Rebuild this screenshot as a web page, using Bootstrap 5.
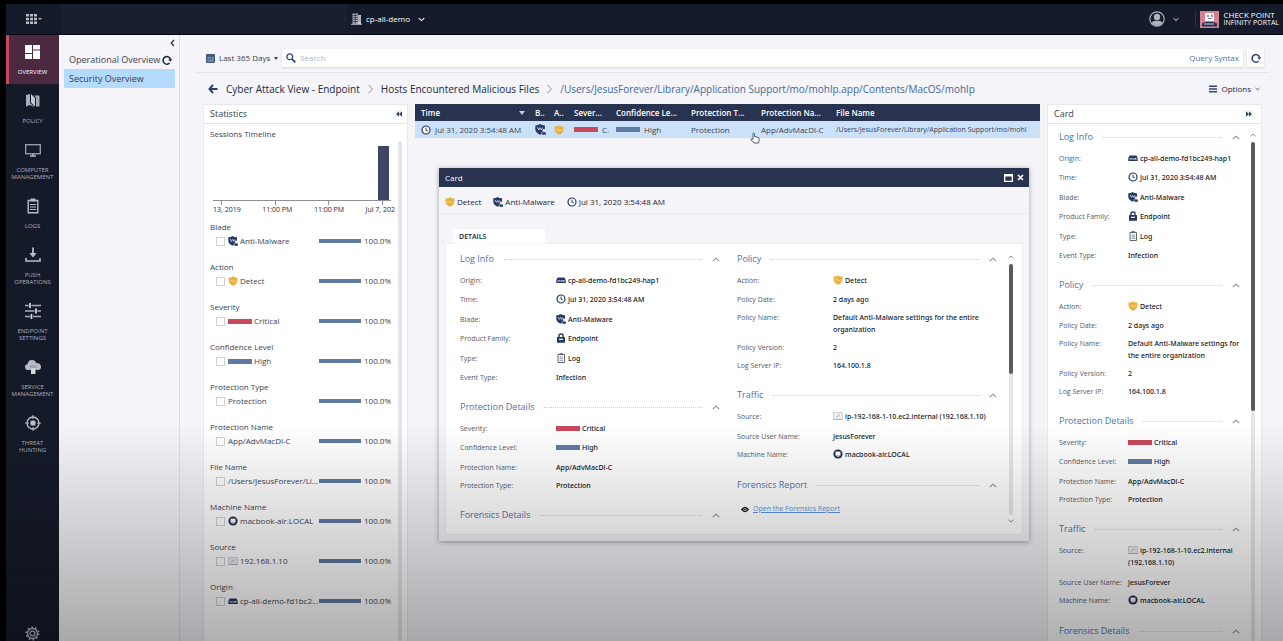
<!DOCTYPE html>
<html lang="en">
<head>
<meta charset="utf-8">
<meta name="viewport" content="width=device-width, initial-scale=1">
<title>Infinity Portal - Security Overview</title>
<link href="https://cdn.jsdelivr.net/npm/bootstrap@5.3.0/dist/css/bootstrap.min.css" rel="stylesheet">
<style>
  :root { --navy:#28334f; --ink:#3c4152; --line:#e3e3e9; --blue:#5f7aa3; --red:#c9485b; --link:#4a74ad; }
  body { font-family:"Open Sans","Noto Sans",sans-serif; font-size:8px; line-height:12px; color:var(--ink); background:#000; overflow:hidden; }
  button, input { font:inherit; color:inherit; }
  a { text-decoration:none; }
  svg { display:block; flex:none; }
  .plain { border:0; background:none; padding:0; }
  .app-shell { height:100vh; border-top:4px solid #000; border-left:6px solid #000; position:relative; }
  .app-shell::after { content:""; position:absolute; inset:auto 0 0 0; height:34vh; z-index:50; pointer-events:none; background:linear-gradient(rgba(0,0,0,0), rgba(0,0,0,.31)); }

  .portal-bar { height:31px; background:#151b2a; color:#fff; border-bottom:1px solid #05070c; }
  .launcher { width:55px; }
  .service-slot { width:286px; background:#191f30; }
  .portal-bar .vr { height:16px; align-self:center; color:#6d7aa0; }
  .brand { font-size:8px; line-height:8px; }
  .brand small { font-size:7px; display:block; }

  .side-rail { width:53px; background:#151a29; }
  .rail-item { padding:8px 0; color:#a9adba; font-size:6px; line-height:7px; text-align:center; }
  .rail-item svg { height:18px; margin:0 auto 8px; }
  .rail-item.current { background:#4b2941; color:#fff; box-shadow:inset 3px 0 #c9485f; }

  .sub-nav { width:121px; background:#f5f4f8; border-right:1px solid #dddde4; font-size:9px; padding:0 4px 0 5px; }
  .sub-nav a { color:var(--ink); padding:3px 3px 3px 5px; }
  .sub-nav a.current { background:#b4dafc; line-height:13px; }

  .workspace { background:#f4f4f9; padding:0 13px 0 17px; }
  .query-bar { height:38px; padding:9px 6px 0 9px; border-bottom:1px solid var(--line); }
  .search-wrap { height:18px; background:#fff; box-shadow:0 1px 2px rgba(0,0,0,.12); }
  .search-wrap input { border:0; outline:0; background:none; }
  .search-wrap input::placeholder { color:#b3b5bd; opacity:1; }
  .search-wrap a { color:var(--link); }
  .square { width:17px; height:18px; background:#fff; box-shadow:0 1px 2px rgba(0,0,0,.14); }
  .crumbs { height:31px; font-size:10px; padding:0 10px 0 11px; color:#23283a; gap:8px; }
  .crumbs a { color:inherit; }
  .crumbs .crumb-now { color:#42689f; }
  .crumbs .options { font-size:8px; }
  .panels { padding:0 8px 0 6px; }

  .pane { background:#fff; border:1px solid #e8e8ed; border-bottom:0; }
  .pane-head { height:19px; border-bottom:1px solid var(--line); font-size:9px; padding:0 5px 0 6px; }
  .stats { width:205px; }
  .stats-body { padding:4px 16px 0 6px; }
  .plot { height:55px; border-bottom:1px solid #8d8f98; padding-right:2px; margin:6px 0 0 3px; }
  .plot-bar { width:11px; background:#3d4664; }
  .ticks { height:4px; padding:0 8px 0 11px; }
  .ticks i { width:1px; background:#8d8f98; }
  .tick-labels { font-size:7px; line-height:10px; color:#23283a; margin:0 -4px 5px 3px; white-space:nowrap; }
  .facet { margin-bottom:12px; line-height:14px; }
  .facet-row { height:14px; padding-left:6px; }
  .facet-row label { white-space:nowrap; gap:2px; }
  .facet-row input { appearance:none; width:9px; height:9px; margin:0 3px 0 0; border:1px solid #cfd0d6; background:transparent; flex:none; }
  .facet-row input:checked { background:var(--blue); }
  .meter { width:42px; height:4px; background:var(--blue); }
  .share { width:30px; text-align:right; }
  .level { display:inline-block; width:24px; height:5px; flex:none; background:var(--blue); }
  .level.critical { background:var(--red); }
  .track { position:absolute; width:4px; background:#e6e6ea; border-radius:2px; }
  .thumb { background:#5b5b60; border-radius:2px; }

  .events { margin:0 7px; }
  .log-table { width:100%; table-layout:fixed; white-space:nowrap; }
  .log-table th { height:17px; background:var(--navy); color:#fff; font-weight:600; padding:0 0 0 6px; overflow:hidden; }
  .log-table td { height:17px; background:#cbe1fa; padding:0 0 0 6px; overflow:hidden; }
  .log-table td:last-child { font-size:7px; }
  .pointer { position:absolute; left:335px; top:28px; z-index:5; }

  .record { position:absolute; left:24px; right:11px; top:64px; background:#f5f4f8; box-shadow:0 1px 5px rgba(0,0,0,.35); z-index:4; color:#1e2233; }
  .record-head { height:19px; background:var(--navy); color:#fff; padding:0 5px 0 6px; }
  .record-sum { height:27px; padding:3px 6px 0; gap:12px; border-bottom:1px solid #e9e9ee; }
  .record-sum span { gap:2px; }
  .record-tab { width:92px; height:15px; margin:15px 0 0 14px; padding:0 6px; font-size:7px; font-weight:600; background:#fff; text-align:left; color:#1e2233; }
  .record-body { margin:0 7px 7px; background:#fff; height:290px; overflow:hidden; padding:8px 25px 0 14px; position:relative; box-shadow:0 0 1px rgba(0,0,0,.2); gap:17px; }
  .col-facts { width:0; flex:1 1 0; }

  .detail { width:215px; }
  .detail-body { padding:6px 21px 0 11px; position:relative; }
  .fact-head { height:14px; font-size:9px; color:var(--link); margin-bottom:9px; gap:10px; }
  .fact-head h2 { font-size:9px; line-height:14px; font-weight:400; margin:0; }
  .fact-head i { border-top:1px dotted #cfd1d8; }
  .facts { margin:0 0 10px; font-size:7px; }
  .fact { display:grid; grid-template-columns:96px 1fr; min-height:18px; }
  .fact dt { font-weight:400; color:#555a68; white-space:nowrap; }
  .fact dd { margin:0 0 6px; font-family:"Noto Sans","Open Sans",sans-serif; font-weight:500; color:#141828; }
  .fact.pic { min-height:19px; }
  .fact.pic:nth-child(even) { min-height:20px; }
  .fact.roomy dd { margin-bottom:8px; }
  .fact svg, .fact .level { display:inline-block; vertical-align:middle; margin:-2px 2px 0 0; }
  .detail .fact { grid-template-columns:69px 1fr; }
  .detail dd { margin-right:-8px; }
  .report-link { font-size:7px; color:#5c94dd; text-decoration:underline; margin-top:11px; }
</style>
</head>
<body>
<svg width="0" height="0" class="position-absolute" aria-hidden="true">
  <symbol id="i-clock" viewBox="0 0 10 10"><circle cx="5" cy="5" r="4" fill="#fff" stroke="#263a66" stroke-width="1.2"/><path d="M5 2.6V5.2L6.8 6" fill="none" stroke="#263a66"/></symbol>
  <symbol id="i-blade" viewBox="0 0 10 10"><path d="M.3 1.3Q3 1.300 4.600 0Q6.200 1.300 9 1.300V5Q8.500 8.200 4.600 9.700Q.6 8.200.3 5Z" fill="#263a66"/><path d="M2.200 3l1.200 2.400L4.700 3.400 5.800 5.400 6.800 3.400" fill="none" stroke="#dfe6f3" stroke-width=".8"/><circle cx="8" cy="5.800" r="1.200" fill="#e8edf6"/><path d="M6.200 7.200h3.800V10H6.200z" fill="#263a66" stroke="#fff" stroke-width=".4"/></symbol>
  <symbol id="i-detect" viewBox="0 0 10 10"><path d="M.6 1.300Q3 2 5 .3Q7 2 9.400 1.300V5Q9 8.200 5 9.800Q1 8.200.6 5Z" fill="#e9b140"/><path d="M1.800 5h1.400L4.300 3.900 5.600 6.100 6.700 5h1.500" fill="none" stroke="#fbe3a8" stroke-width=".7"/></symbol>
  <symbol id="i-lock" viewBox="0 0 10 10"><path d="M3 5V2.600Q3 1 5 1Q7 1 7 2.600V5" fill="none" stroke="#263a66" stroke-width="1.400"/><rect x="1" y="4" width="8" height="5.700" rx=".5" fill="#263a66"/><rect x="3" y="5.700" width="4" height="1.200" fill="#fff"/></symbol>
  <symbol id="i-log" viewBox="0 0 10 10"><path d="M2 1.500h6.500v8H2zM3.500.7H7" fill="#fff" stroke="#5d6678"/><path d="M3.500 4h3.600M3.500 5.700h3.600M3.500 7.400h3.600" stroke="#7a8190" stroke-width=".8"/></symbol>
  <symbol id="i-gateway" viewBox="0 0 10 10"><path d="M.3 5L1.600 2.600H8.400L9.700 5V8H.3Z" fill="#263a66"/><path d="M1.600 5h6.900v1.600H1.600z" fill="#c8d2e4"/><path d="M3 5v1.600M4.600 5v1.600M6 5v1.600" stroke="#263a66" stroke-width=".6"/></symbol>
  <symbol id="i-host" viewBox="0 0 10 10"><circle cx="5" cy="5" r="4.600" fill="#1f2f57"/><path d="M2.500 2.600h5v4h-5z" fill="#fff"/><path d="M3.500 7.200h3" stroke="#fff" stroke-width=".8"/></symbol>
  <symbol id="i-source" viewBox="0 0 10 10"><rect x=".5" y="1.500" width="9" height="7" fill="#eee" stroke="#c4c5ca" stroke-width=".7"/><path d="M3 6.200L7 3.500M.7 8.500h9" stroke="#a0a2a9" stroke-width=".7"/></symbol>
  <symbol id="i-up" viewBox="0 0 8 5"><path d="M.8 4.200L4 1.200 7.200 4.200" fill="none" stroke="currentColor" stroke-width="1.100"/></symbol>
  <symbol id="i-down" viewBox="0 0 8 5"><path d="M.8.800L4 3.800 7.200.8" fill="none" stroke="currentColor" stroke-width="1.200"/></symbol>
  <symbol id="i-reload" viewBox="0 0 10 10"><path d="M7.600 8A3.800 3.800 0 1 1 8.500 4.200" fill="none" stroke="currentColor" stroke-width="1.500"/><path d="M6.200 4.200H10.200L8.400 6.800Z" fill="currentColor"/></symbol>
</svg>

<div class="app-shell d-flex flex-column">
  <header class="portal-bar d-flex flex-shrink-0">
    <button class="plain launcher d-flex align-items-center justify-content-center" aria-label="Applications">
      <svg width="16" height="10" viewBox="0 0 16 10" fill="#b9bcc6"><path d="M0 0h3v2.600H0zM4 0h3v2.600H4zM8 0h3v2.600H8zM0 3.700h3v2.600H0zM4 3.700h3v2.600H4zM8 3.700h3v2.600H8zM0 7.400h3V10H0zM4 7.400h3V10H4zM8 7.400h3V10H8zM12 4h4l-2 2z"/></svg>
    </button>
    <div class="service-slot"></div>
    <button class="plain d-flex align-items-center ps-1">
      <svg width="11" height="12" viewBox="0 0 11 12"><path d="M1.500.5h5.500V11H1.500z" fill="#a3a9b7"/><path d="M2 2.500h6M2 4.500h6M2 6.500h6M2 8.500h6M4.300 .5V11" stroke="#2b3347" stroke-width=".7"/><path d="M7 2h3V11H7z" fill="#c9ccd5"/><path d="M7 4h3M7 6h3M7 8h3" stroke="#6d7485" stroke-width=".6"/><path d="M0 11.300h11" stroke="#b9bcc6"/></svg>
      <span class="ms-1">cp-all-demo</span>
      <svg class="ms-2" width="7" height="5"><use href="#i-down"/></svg>
    </button>
    <div class="ms-auto d-flex align-items-center pe-1">
      <button class="plain d-flex align-items-center" aria-label="Account">
        <svg width="16" height="16" viewBox="0 0 16 16"><circle cx="8" cy="8" r="7.200" fill="#161c2b" stroke="#aeb2bd" stroke-width="1.200"/><circle cx="8" cy="6" r="3.200" fill="#aeb2bd"/><path d="M2.400 11.500Q4 9.700 6.300 9.700H9.700Q12 9.700 13.600 11.500Q11.800 14.800 8 15Q4.200 14.800 2.400 11.500Z" fill="#aeb2bd"/></svg>
        <svg class="ms-2" width="6" height="5"><use href="#i-down"/></svg>
      </button>
      <div class="vr ms-3 me-1"></div>
      <svg width="19" height="17" viewBox="0 0 19 17"><rect width="19" height="17" fill="#d4808f"/><path d="M5 2h9v9H5z" fill="#f4f1f4"/><path d="M7 4h2v2H7zM11 3.500h2V6h-2z" fill="#9aa0b2"/><path d="M8 7.500h4" stroke="#7f869b"/><path d="M2 12.500L6 10.500H13L17 12.500V15.500H2Z" fill="#263352"/><path d="M4 13h10" stroke="#cdd2de"/></svg>
      <div class="brand ms-1 text-nowrap">CHECK POINT<small>INFINITY PORTAL</small></div>
    </div>
  </header>

  <div class="d-flex flex-grow-1 overflow-hidden">
    <nav class="side-rail d-flex flex-column flex-shrink-0" aria-label="Sections">
      <a href="#" class="rail-item current"><svg width="15" viewBox="0 0 15 18" fill="#fff"><path d="M0 2h7v8H0zM8 2h7v4.500H8zM0 11h7v5H0zM8 7.500h7V16H8z"/></svg>OVERVIEW</a>
      <a href="#" class="rail-item"><svg width="14" viewBox="0 0 14 18"><path d="M0 3L4 2V11L9 15.500 4 13 0 14.500Z" fill="#a9adba"/><path d="M5 2L9 6V14.500L5 10.500Z" fill="#c4c7d0"/><path d="M8 3.500H13.500V14.500H10V5.500Z" fill="#a1a6b4"/></svg>POLICY</a>
      <a href="#" class="rail-item"><svg width="16" viewBox="0 0 16 18"><rect x=".7" y="3.700" width="14.600" height="9" fill="none" stroke="#9da2b0" stroke-width="1.300"/><path d="M5 15h6M8 13v2" stroke="#b9bcc6" stroke-width="1.500"/></svg>COMPUTER<br>MANAGEMENT</a>
      <a href="#" class="rail-item"><svg width="12" viewBox="0 0 12 18"><path d="M1.200 3.500h9.600v12.300H1.200z" fill="none" stroke="#b9bcc6" stroke-width="1.400"/><path d="M3.500 1.500h5v3h-5z" fill="#b9bcc6"/><path d="M3 7.500h6M3 10h6M3 12.500h6" stroke="#b9bcc6" stroke-width="1.200"/></svg>LOGS</a>
      <a href="#" class="rail-item"><svg width="16" viewBox="0 0 16 18"><path d="M8 1.500V9" stroke="#b9bcc6" stroke-width="1.800"/><path d="M4.300 7h7.400L8 11.500z" fill="#b9bcc6"/><path d="M1 12v3h14v-3" fill="none" stroke="#b9bcc6" stroke-width="1.600"/></svg>PUSH<br>OPERATIONS</a>
      <a href="#" class="rail-item"><svg width="16" viewBox="0 0 16 18"><path d="M0 3.500h3.500M6.500 3.500H16M0 9h9.500M12.500 9H16M0 14.500h5M8 14.500h8" stroke="#a9adba" stroke-width="1.400"/><path d="M5 1v5M11 6.500v5M6.500 12v5" stroke="#dfe1e6" stroke-width="1.700"/></svg>ENDPOINT<br>SETTINGS</a>
      <a href="#" class="rail-item"><svg width="16" viewBox="0 0 16 18"><path d="M3 12Q0 12 0 9Q0 6.500 2.600 6.300Q3 2 7 2Q10.300 2 11.200 5Q16 5 16 9Q16 12 13 12Z" fill="#b9bcc6"/><path d="M5 7h6.500v5H5z" fill="#a0a4b1"/><path d="M6 10h4.500v6H6z" fill="#d5d7de"/></svg>SERVICE<br>MANAGEMENT</a>
      <a href="#" class="rail-item"><svg width="16" viewBox="0 0 16 18"><circle cx="8" cy="9" r="6" fill="none" stroke="#b9bcc6" stroke-width="1.300"/><circle cx="8" cy="9" r="2.600" fill="#c9ccd4"/><path d="M8 1v4M8 13v4M0 9h4M12 9h4M5.500 6.500l5 5M10.500 6.500l-5 5" stroke="#b9bcc6"/></svg>THREAT<br>HUNTING</a>
      <button class="plain mt-auto mx-auto" aria-label="Settings"><svg width="15" height="15" viewBox="0 0 15 15" fill="none" stroke="#b9bcc6"><circle cx="7.500" cy="7.500" r="5" stroke-width="1.300"/><circle cx="7.500" cy="7.500" r="2.400" stroke-width="1.200"/><circle cx="7.500" cy="7.500" r="6.300" stroke-width="1.500" stroke-dasharray="1.600 2.358"/></svg></button>
    </nav>

    <aside class="sub-nav flex-shrink-0">
      <div class="d-flex justify-content-end pt-1"><button class="plain" aria-label="Collapse menu"><svg width="5" height="8" viewBox="0 0 5 8"><path d="M4 1L1.200 4 4 7" fill="none" stroke="#23283a" stroke-width="1.200"/></svg></button></div>
      <nav class="d-flex flex-column mt-1">
        <a href="#" class="d-flex align-items-center justify-content-between text-nowrap">Operational Overview <svg width="10" height="10" color="#1d2130"><use href="#i-reload"/></svg></a>
        <a href="#" class="current">Security Overview</a>
      </nav>
    </aside>

    <main class="workspace flex-grow-1 d-flex flex-column overflow-hidden">
      <div class="query-bar d-flex align-items-center flex-shrink-0">
        <button class="plain d-flex align-items-center text-nowrap">
          <svg width="9" height="9" viewBox="0 0 9 9"><rect width="9" height="9" rx="1" fill="#42587f"/><path d="M1.500 3h6v4.800h-6z" fill="#8ea3c4"/><path d="M1.500 4.500h6M1.500 6h6M3.500 3v4.800M5.500 3v4.800" stroke="#42587f" stroke-width=".6"/></svg>
          <span class="mx-1">Last 365 Days</span>
          <svg width="4" height="3" viewBox="0 0 4 3"><path d="M0 0h4L2 3z" fill="#3c4152"/></svg>
        </button>
        <div class="search-wrap d-flex align-items-center flex-grow-1 mx-1 px-1">
          <svg width="10" height="10" viewBox="0 0 10 10" fill="none" stroke="#31456f"><circle cx="3.800" cy="3.800" r="2.900" stroke-width="1.300"/><path d="M6 6l3.300 3.300" stroke-width="1.800"/></svg>
          <input class="flex-grow-1 ms-1 p-0" type="text" placeholder="Search" aria-label="Search">
          <a href="#">Query Syntax</a>
        </div>
        <button class="plain square d-flex align-items-center justify-content-center" aria-label="Refresh"><svg width="10" height="10" color="#31456f"><use href="#i-reload"/></svg></button>
      </div>

      <div class="crumbs d-flex align-items-center flex-shrink-0 text-nowrap">
        <button class="plain" aria-label="Back"><svg width="10" height="10" viewBox="0 0 10 10"><path d="M5 .8L1.500 5 5 9.200M1.500 5H9.500" fill="none" stroke="#28406f" stroke-width="2"/></svg></button>
        <a href="#">Cyber Attack View - Endpoint</a>
        <svg width="5" height="10" viewBox="0 0 5 10"><path d="M.5 .8L4.500 5 .5 9.200" fill="none" stroke="#8a8d97"/></svg>
        <a href="#">Hosts Encountered Malicious Files</a>
        <svg width="5" height="10" viewBox="0 0 5 10"><path d="M.5 .8L4.500 5 .5 9.200" fill="none" stroke="#8a8d97"/></svg>
        <a href="#" class="crumb-now">/Users/JesusForever/Library/Application Support/mo/mohlp.app/Contents/MacOS/mohlp</a>
        <button class="plain options ms-auto d-flex align-items-center">
          <svg width="8" height="8" viewBox="0 0 8 8"><path d="M0 1.200h8M0 4h8M0 6.800h8" stroke="#31456f" stroke-width="1.500"/></svg>
          <span class="mx-1">Options</span>
          <svg width="5" height="4"><use href="#i-down"/></svg>
        </button>
      </div>

      <div class="panels d-flex flex-grow-1 overflow-hidden">
        <section class="pane stats flex-shrink-0 position-relative">
          <div class="pane-head d-flex align-items-center justify-content-between"><span>Statistics</span><button class="plain" aria-label="Collapse statistics"><svg width="6" height="6" viewBox="0 0 6 6"><path d="M3 .3L0 3 3 5.700zM6 .3L3 3 6 5.700z" fill="#31456f"/></svg></button></div>
          <div class="stats-body">
            <div>Sessions Timeline</div>
            <div class="plot d-flex align-items-end justify-content-end"><div class="plot-bar" style="height:100%"></div></div>
            <div class="ticks d-flex justify-content-between"><i></i><i></i><i></i><i></i></div>
            <div class="tick-labels d-flex justify-content-between"><span>13, 2019</span><span>11:00 PM</span><span>11:00 PM</span><span>Jul 7, 202</span></div>

            <div class="facet">Blade
              <div class="facet-row d-flex align-items-center"><input type="checkbox" id="f1"><label for="f1" class="d-flex align-items-center flex-grow-1"><svg width="10" height="10"><use href="#i-blade"/></svg>Anti-Malware</label><span class="meter"></span><span class="share">100.0%</span></div></div>
            <div class="facet">Action
              <div class="facet-row d-flex align-items-center"><input type="checkbox" id="f2"><label for="f2" class="d-flex align-items-center flex-grow-1"><svg width="10" height="10"><use href="#i-detect"/></svg>Detect</label><span class="meter"></span><span class="share">100.0%</span></div></div>
            <div class="facet">Severity
              <div class="facet-row d-flex align-items-center"><input type="checkbox" id="f3"><label for="f3" class="d-flex align-items-center flex-grow-1"><span class="level critical"></span>Critical</label><span class="meter"></span><span class="share">100.0%</span></div></div>
            <div class="facet">Confidence Level
              <div class="facet-row d-flex align-items-center"><input type="checkbox" id="f4"><label for="f4" class="d-flex align-items-center flex-grow-1"><span class="level"></span>High</label><span class="meter"></span><span class="share">100.0%</span></div></div>
            <div class="facet">Protection Type
              <div class="facet-row d-flex align-items-center"><input type="checkbox" id="f5"><label for="f5" class="flex-grow-1">Protection</label><span class="meter"></span><span class="share">100.0%</span></div></div>
            <div class="facet">Protection Name
              <div class="facet-row d-flex align-items-center"><input type="checkbox" id="f6"><label for="f6" class="flex-grow-1">App/AdvMacDl-C</label><span class="meter"></span><span class="share">100.0%</span></div></div>
            <div class="facet">File Name
              <div class="facet-row d-flex align-items-center"><input type="checkbox" id="f7"><label for="f7" class="flex-grow-1">/Users/JesusForever/Li...</label><span class="meter"></span><span class="share">100.0%</span></div></div>
            <div class="facet">Machine Name
              <div class="facet-row d-flex align-items-center"><input type="checkbox" id="f8"><label for="f8" class="d-flex align-items-center flex-grow-1"><svg width="10" height="10"><use href="#i-host"/></svg>macbook-air.LOCAL</label><span class="meter"></span><span class="share">100.0%</span></div></div>
            <div class="facet">Source
              <div class="facet-row d-flex align-items-center"><input type="checkbox" id="f9"><label for="f9" class="d-flex align-items-center flex-grow-1"><svg width="10" height="10"><use href="#i-source"/></svg>192.168.1.10</label><span class="meter"></span><span class="share">100.0%</span></div></div>
            <div class="facet">Origin
              <div class="facet-row d-flex align-items-center"><input type="checkbox" id="f10"><label for="f10" class="d-flex align-items-center flex-grow-1"><svg width="10" height="10"><use href="#i-gateway"/></svg>cp-all-demo-fd1bc2...</label><span class="meter"></span><span class="share">100.0%</span></div></div>
          </div>
          <div class="track" style="right:5px;top:36px;bottom:0"></div>
        </section>

        <section class="events flex-grow-1 position-relative" style="min-width:0">
          <table class="log-table">
            <colgroup><col style="width:114px"><col style="width:19px"><col style="width:20px"><col style="width:42px"><col style="width:75px"><col style="width:70px"><col style="width:75px"><col></colgroup>
            <thead><tr><th><div class="d-flex align-items-center justify-content-between pe-1">Time<svg width="6" height="4" viewBox="0 0 6 4"><path d="M0 0h6L3 4z" fill="#c9cddb"/></svg></div></th><th>B..</th><th>A..</th><th>Sever...</th><th>Confidence Le...</th><th>Protection T...</th><th>Protection Na...</th><th>File Name</th></tr></thead>
            <tbody><tr>
              <td><div class="d-flex align-items-center"><svg class="me-1" width="10" height="10"><use href="#i-clock"/></svg>Jul 31, 2020 3:54:48 AM</div></td>
              <td><svg width="11" height="11"><use href="#i-blade"/></svg></td>
              <td><svg width="10" height="10"><use href="#i-detect"/></svg></td>
              <td><div class="d-flex align-items-center gap-1"><span class="level critical"></span>C.</div></td>
              <td><div class="d-flex align-items-center gap-1"><span class="level"></span>High</div></td>
              <td>Protection</td><td>App/AdvMacDl-C</td><td>/Users/JesusForever/Library/Application Support/mo/mohl</td>
            </tr></tbody>
          </table>
          <svg class="pointer" width="10" height="12" viewBox="0 0 10 12"><path d="M3 7.500V1.500Q3.700.5 4.400 1.500V4.500L8.500 5.500Q9.500 6 9.200 7.500L8.500 11H4L.8 7.700Q.8 6.500 2 6.800Z" fill="#fff" stroke="#333849" stroke-width=".8"/></svg>

          <article class="record">
            <div class="record-head d-flex align-items-center"><span class="me-auto">Card</span>
              <button class="plain me-1" aria-label="Maximize"><svg width="9" height="8" viewBox="0 0 9 8"><path d="M0 0h9v8H0zM1.300 2.600v4.100h6.400V2.600z" fill="#fff" fill-rule="evenodd"/></svg></button>
              <button class="plain" aria-label="Close"><svg width="7" height="7" viewBox="0 0 7 7"><path d="M1 1l5 5M6 1L1 6" stroke="#fff" stroke-width="1.700"/></svg></button></div>
            <div class="record-sum d-flex align-items-center">
              <span class="d-flex align-items-center"><svg width="10" height="10"><use href="#i-detect"/></svg>Detect</span>
              <span class="d-flex align-items-center"><svg width="10" height="10"><use href="#i-blade"/></svg>Anti-Malware</span>
              <span class="d-flex align-items-center"><svg width="10" height="10"><use href="#i-clock"/></svg>Jul 31, 2020 3:54:48 AM</span>
            </div>
            <button class="plain record-tab d-block">DETAILS</button>
            <div class="record-body d-flex">
              <div class="col-facts">
                <div class="fact-head d-flex align-items-center"><h2>Log Info</h2><i class="flex-grow-1"></i><svg width="8" height="5" color="#8b8d95"><use href="#i-up"/></svg></div>
                <dl class="facts">
                  <div class="fact pic"><dt>Origin:</dt><dd><svg width="10" height="10"><use href="#i-gateway"/></svg>cp-all-demo-fd1bc249-hap1</dd></div>
                  <div class="fact pic"><dt>Time:</dt><dd><svg width="10" height="10"><use href="#i-clock"/></svg>Jul 31, 2020 3:54:48 AM</dd></div>
                  <div class="fact pic"><dt>Blade:</dt><dd><svg width="10" height="10"><use href="#i-blade"/></svg>Anti-Malware</dd></div>
                  <div class="fact pic"><dt>Product Family:</dt><dd><svg width="10" height="10"><use href="#i-lock"/></svg>Endpoint</dd></div>
                  <div class="fact pic"><dt>Type:</dt><dd><svg width="10" height="10"><use href="#i-log"/></svg>Log</dd></div>
                  <div class="fact"><dt>Event Type:</dt><dd>Infection</dd></div>
                </dl>
                <div class="fact-head d-flex align-items-center"><h2>Protection Details</h2><i class="flex-grow-1"></i><svg width="8" height="5" color="#8b8d95"><use href="#i-up"/></svg></div>
                <dl class="facts">
                  <div class="fact pic"><dt>Severity:</dt><dd><span class="level critical"></span>Critical</dd></div>
                  <div class="fact pic"><dt>Confidence Level:</dt><dd><span class="level"></span>High</dd></div>
                  <div class="fact"><dt>Protection Name:</dt><dd>App/AdvMacDl-C</dd></div>
                  <div class="fact"><dt>Protection Type:</dt><dd>Protection</dd></div>
                </dl>
                <div class="fact-head d-flex align-items-center"><h2>Forensics Details</h2><i class="flex-grow-1"></i><svg width="8" height="5" color="#8b8d95"><use href="#i-up"/></svg></div>
              </div>
              <div class="col-facts">
                <div class="fact-head d-flex align-items-center"><h2>Policy</h2><i class="flex-grow-1"></i><svg width="8" height="5" color="#8b8d95"><use href="#i-up"/></svg></div>
                <dl class="facts">
                  <div class="fact pic"><dt>Action:</dt><dd><svg width="10" height="10"><use href="#i-detect"/></svg>Detect</dd></div>
                  <div class="fact"><dt>Policy Date:</dt><dd>2 days ago</dd></div>
                  <div class="fact"><dt>Policy Name:</dt><dd>Default Anti-Malware settings for the entire organization</dd></div>
                  <div class="fact"><dt>Policy Version:</dt><dd>2</dd></div>
                  <div class="fact"><dt>Log Server IP:</dt><dd>164.100.1.8</dd></div>
                </dl>
                <div class="fact-head d-flex align-items-center"><h2>Traffic</h2><i class="flex-grow-1"></i><svg width="8" height="5" color="#8b8d95"><use href="#i-up"/></svg></div>
                <dl class="facts">
                  <div class="fact pic roomy"><dt>Source:</dt><dd class="text-nowrap"><svg width="10" height="10"><use href="#i-source"/></svg>ip-192-168-1-10.ec2.internal (192.168.1.10)</dd></div>
                  <div class="fact"><dt>Source User Name:</dt><dd>JesusForever</dd></div>
                  <div class="fact pic"><dt>Machine Name:</dt><dd><svg width="10" height="10"><use href="#i-host"/></svg>macbook-air.LOCAL</dd></div>
                </dl>
                <div class="fact-head d-flex align-items-center"><h2>Forensics Report</h2><i class="flex-grow-1"></i><svg width="8" height="5" color="#8b8d95"><use href="#i-up"/></svg></div>
                <a href="#" class="report-link d-flex align-items-center"><svg class="mx-1" width="8" height="7" viewBox="0 0 9 7"><path d="M0 3.500Q4.500-2.500 9 3.500Q4.500 9.500 0 3.500Z" fill="#11131c"/><circle cx="4.500" cy="3.500" r="1.800" fill="#fff"/><circle cx="4.500" cy="3.500" r="1" fill="#11131c"/></svg>Open the Forensics Report</a>
              </div>
              <div class="track" style="right:9px;top:20px;bottom:19px"><div class="thumb" style="height:44%"></div></div>
              <svg class="position-absolute" style="right:8px;top:11px" width="6" height="4" color="#777"><use href="#i-up"/></svg>
              <svg class="position-absolute" style="right:8px;bottom:11px" width="6" height="4" color="#777"><use href="#i-down"/></svg>
            </div>
          </article>
        </section>

        <section class="pane detail flex-shrink-0 d-flex flex-column">
          <div class="pane-head d-flex flex-shrink-0 align-items-center justify-content-between"><span>Card</span><button class="plain me-1" aria-label="Collapse card"><svg width="6" height="6" viewBox="0 0 6 6"><path d="M0 .3L3 3 0 5.700zM3 .3L6 3 3 5.700z" fill="#31456f"/></svg></button></div>
          <div class="detail-body flex-grow-1 overflow-hidden">
            <div class="fact-head d-flex align-items-center"><h2>Log Info</h2><i class="flex-grow-1"></i><svg width="8" height="5" color="#8b8d95"><use href="#i-up"/></svg></div>
            <dl class="facts">
              <div class="fact pic"><dt>Origin:</dt><dd><svg width="10" height="10"><use href="#i-gateway"/></svg>cp-all-demo-fd1bc249-hap1</dd></div>
              <div class="fact pic"><dt>Time:</dt><dd><svg width="10" height="10"><use href="#i-clock"/></svg>Jul 31, 2020 3:54:48 AM</dd></div>
              <div class="fact pic"><dt>Blade:</dt><dd><svg width="10" height="10"><use href="#i-blade"/></svg>Anti-Malware</dd></div>
              <div class="fact pic"><dt>Product Family:</dt><dd><svg width="10" height="10"><use href="#i-lock"/></svg>Endpoint</dd></div>
              <div class="fact pic"><dt>Type:</dt><dd><svg width="10" height="10"><use href="#i-log"/></svg>Log</dd></div>
              <div class="fact"><dt>Event Type:</dt><dd>Infection</dd></div>
            </dl>
            <div class="fact-head d-flex align-items-center"><h2>Policy</h2><i class="flex-grow-1"></i><svg width="8" height="5" color="#8b8d95"><use href="#i-up"/></svg></div>
            <dl class="facts">
              <div class="fact pic"><dt>Action:</dt><dd><svg width="10" height="10"><use href="#i-detect"/></svg>Detect</dd></div>
              <div class="fact"><dt>Policy Date:</dt><dd>2 days ago</dd></div>
              <div class="fact"><dt>Policy Name:</dt><dd>Default Anti-Malware settings for the entire organization</dd></div>
              <div class="fact"><dt>Policy Version:</dt><dd>2</dd></div>
              <div class="fact"><dt>Log Server IP:</dt><dd>164.100.1.8</dd></div>
            </dl>
            <div class="fact-head d-flex align-items-center"><h2>Protection Details</h2><i class="flex-grow-1"></i><svg width="8" height="5" color="#8b8d95"><use href="#i-up"/></svg></div>
            <dl class="facts">
              <div class="fact pic"><dt>Severity:</dt><dd><span class="level critical"></span>Critical</dd></div>
              <div class="fact pic"><dt>Confidence Level:</dt><dd><span class="level"></span>High</dd></div>
              <div class="fact"><dt>Protection Name:</dt><dd>App/AdvMacDl-C</dd></div>
              <div class="fact"><dt>Protection Type:</dt><dd>Protection</dd></div>
            </dl>
            <div class="fact-head d-flex align-items-center"><h2>Traffic</h2><i class="flex-grow-1"></i><svg width="8" height="5" color="#8b8d95"><use href="#i-up"/></svg></div>
            <dl class="facts">
              <div class="fact pic roomy"><dt>Source:</dt><dd><svg width="10" height="10"><use href="#i-source"/></svg>ip-192-168-1-10.ec2.internal<br>(192.168.1.10)</dd></div>
              <div class="fact"><dt>Source User Name:</dt><dd>JesusForever</dd></div>
              <div class="fact pic"><dt>Machine Name:</dt><dd><svg width="10" height="10"><use href="#i-host"/></svg>macbook-air.LOCAL</dd></div>
            </dl>
            <div class="fact-head d-flex align-items-center"><h2>Forensics Details</h2><i class="flex-grow-1"></i><svg width="8" height="5" color="#8b8d95"><use href="#i-up"/></svg></div>
            <div class="track" style="right:6px;top:18px;bottom:0"><div class="thumb" style="height:54%"></div></div>
            <svg class="position-absolute" style="right:5px;top:9px" width="6" height="4" color="#777"><use href="#i-up"/></svg>
          </div>
        </section>
      </div>
    </main>
  </div>
</div>
<script src="https://cdn.jsdelivr.net/npm/bootstrap@5.3.0/dist/js/bootstrap.bundle.min.js"></script>
</body>
</html>
